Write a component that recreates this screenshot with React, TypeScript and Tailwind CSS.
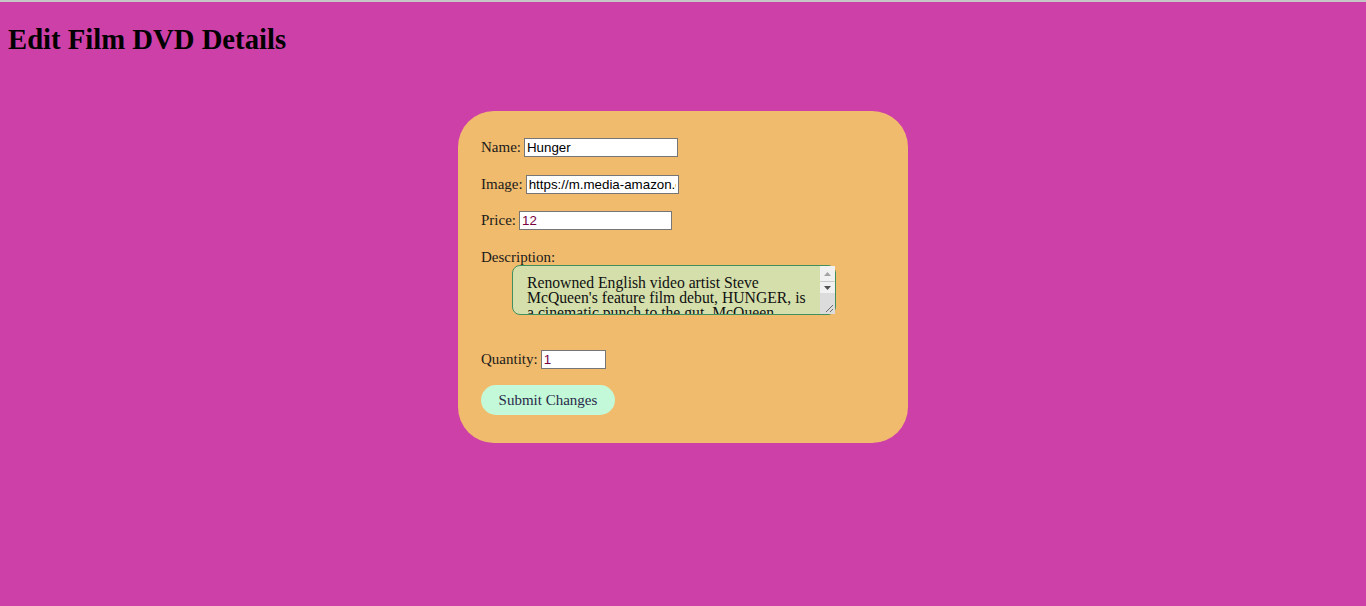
import React from "react";

export default function App() {
  const serif = { fontFamily: '"Liberation Serif", serif' };
  const inputCls =
    "h-[19px] border border-[#767676] bg-white px-[2px] text-[13.33px] leading-none outline-none";
  const inputFont = { fontFamily: '"Liberation Sans", Arial, sans-serif' };
  return (
    <div className="min-h-[606px] w-full border-t-2 border-[#c6c6c6] bg-[#cc40a8]" style={serif}>
      <h1 className="mx-[8px] mt-[21px] mb-0 text-[28.7px] font-bold leading-[33px] text-black">
        Edit Film DVD Details
      </h1>
      <div className="mx-auto mt-[55px] flex h-[332px] w-[450px] flex-col rounded-[36px] bg-[#f1bb6d] pl-[23px] pt-[27px] text-[15px] text-[#1a1a1a]">
        <div className="flex h-[19px] items-center gap-[3px]">
          <span>Name:</span>
          <input className={`${inputCls} w-[154px] text-black`} style={inputFont} defaultValue="Hunger" />
        </div>
        <div className="mt-[18px] flex h-[19px] items-center gap-[3px]">
          <span>Image:</span>
          <input
            className={`${inputCls} w-[153px] text-black`}
            style={inputFont}
            defaultValue="https://m.media-amazon.com/images/hunger.jpg"
          />
        </div>
        <div className="mt-[17px] flex h-[19px] items-center gap-[3px]">
          <span>Price:</span>
          <input className={`${inputCls} w-[153px] text-[#7a0040]`} style={inputFont} defaultValue="12" />
        </div>
        <div className="mt-[19px] h-[17px] leading-[17px]">Description:</div>
        <div className="relative ml-[31px] mt-[-1px] w-[324px]">
          <textarea
            className="block h-[50px] w-[324px] resize-none overflow-hidden rounded-[8px] border border-[#3f8f5f] bg-[#d4dfab] pl-[14px] pr-[24px] pt-[9px] text-[15.7px] leading-[15px] text-[#111] outline-none"
            style={serif}
            defaultValue={
              "Renowned English video artist Steve McQueen's feature film debut, HUNGER, is a cinematic punch to the gut. McQueen depicts the final weeks of Bobby Sands, an IRA member who led a hunger strike in the Maze prison in 1981."
            }
          />
          <div className="absolute right-[1px] top-[1px] flex h-[48px] w-[15px] flex-col">
            <div className="flex h-[15px] items-center justify-center bg-[#f1f1f1]">
              <svg width="7" height="4" viewBox="0 0 7 4">
                <path d="M0 4 L3.5 0 L7 4 Z" fill="#a3a3a3" />
              </svg>
            </div>
            <div className="h-[1px] bg-[#c8c8c8] mx-[1px]" />
            <div className="flex h-[11px] items-center justify-center bg-[#f1f1f1]">
              <svg width="7" height="4" viewBox="0 0 7 4">
                <path d="M0 0 L7 0 L3.5 4 Z" fill="#505050" />
              </svg>
            </div>
            <div className="relative flex-1 bg-[#dcdcdc]">
              <svg className="absolute bottom-[1px] right-[1px]" width="9" height="9" viewBox="0 0 9 9">
                <path d="M8 1 L1 8 M8 5 L5 8" stroke="#6b6b6b" strokeWidth="1" />
              </svg>
            </div>
          </div>
        </div>
        <div className="mt-[35px] flex h-[19px] items-center gap-[3px]">
          <span>Quantity:</span>
          <input className={`${inputCls} w-[65px] text-[#7a0040]`} style={inputFont} defaultValue="1" />
        </div>
        <div className="mt-[16px]">
          <button
            className="h-[30px] w-[134px] rounded-full bg-[#c3f9d8] text-[15px] text-[#2a2a4a]"
            style={serif}
          >
            Submit Changes
          </button>
        </div>
      </div>
    </div>
  );
}
